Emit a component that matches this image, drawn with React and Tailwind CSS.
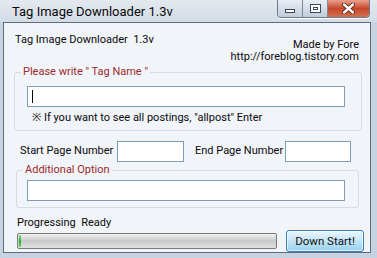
import React from "react";

const font = { fontFamily: 'Roboto, "Noto Sans", sans-serif' };

function Box({ className = "" }) {
  return <div className={"bg-white border border-[#7f9db9] shrink-0 " + className} />;
}

function Group({ label, className = "", children }) {
  return (
    <div className={"relative border border-[#d5dce4] rounded-[3px] " + className}>
      <span className="absolute -top-[8px] left-[6px] px-[2px] bg-[#f1f4f9] text-[#9c2a2a] leading-[14px] whitespace-nowrap">
        {label}
      </span>
      {children}
    </div>
  );
}

export default function App() {
  return (
    <div
      className="w-[377px] h-[258px] overflow-hidden bg-[#c7d3e0] flex flex-col text-[11px] text-[#0a0a0a] leading-[14px]"
      style={font}
    >
      {/* title bar */}
      <div className="h-[22px] shrink-0 flex items-start bg-gradient-to-b from-[#e4e9ef] to-[#d3dbe5] pl-[12px] pr-[7px]">
        <div className="text-[13px] leading-[16px] pt-[4px] flex-1">Tag Image Downloader 1.3v</div>
        <div className="flex h-[18px] rounded-b-[4px] border border-t-0 border-[#6b7b8f] overflow-hidden shadow-[0_1px_0_#ffffff]">
          <div className="w-[25px] bg-gradient-to-b from-[#e9eef4] to-[#c2ccd8] border-r border-[#7d8a9b] flex items-center justify-center">
            <div className="w-[10px] h-[4px] mt-[5px] border border-[#3b4656] bg-white" />
          </div>
          <div className="w-[25px] bg-gradient-to-b from-[#e9eef4] to-[#c2ccd8] border-r border-[#7d8a9b] flex items-center justify-center">
            <div className="w-[11px] h-[9px] border border-[#3b4656] bg-white flex items-center justify-center">
              <div className="w-[5px] h-[3px] border border-[#3b4656]" />
            </div>
          </div>
          <div className="w-[41px] bg-gradient-to-b from-[#e8a08e] via-[#c7462a] to-[#d0714f] flex items-center justify-center">
            <svg width="13" height="11" viewBox="0 0 13 11">
              <path d="M2 1.5 L11 9.5 M11 1.5 L2 9.5" stroke="#4a1a10" strokeWidth="4" strokeLinecap="round" />
              <path d="M2 1.5 L11 9.5 M11 1.5 L2 9.5" stroke="#ffffff" strokeWidth="2.4" strokeLinecap="round" />
            </svg>
          </div>
        </div>
      </div>

      {/* client area */}
      <div className="h-[231px] shrink-0 ml-[3px] mr-[6px] bg-[#f1f4f9] border border-[#5b6b80] flex flex-col pl-[10px] pr-[8px]">
        {/* header */}
        <div className="h-[42px] shrink-0 flex justify-between">
          <div className="pt-[10px] pl-[1px] whitespace-nowrap">Tag Image Downloader &nbsp;1.3v</div>
          <div className="text-right leading-[12px] pt-[16px] pr-[3px] whitespace-nowrap">
            <div>Made by Fore</div>
            <div>http://foreblog.tistory.com</div>
          </div>
        </div>

        <Group label={'Please write " Tag Name "'} className="mt-[7px] h-[60px] pl-[12px] pr-[16px] pt-[13px]">
          <div className="h-[21px] bg-white border border-[#7f9db9] flex items-center pl-[4px]">
            <div className="w-[1px] h-[13px] bg-black" />
          </div>
          <div className="mt-[4px] pl-[5px] whitespace-nowrap">※ If you want to see all postings, "allpost" Enter</div>
        </Group>

        <div className="flex items-center mt-[10px] pl-[6px] whitespace-nowrap">
          <span className="w-[97px] shrink-0">Start Page Number</span>
          <Box className="w-[67px] h-[21px]" />
          <span className="ml-[11px] w-[90px] shrink-0">End Page Number</span>
          <Box className="w-[66px] h-[21px]" />
        </div>

        <Group label="Additional Option" className="mt-[8px] ml-[2px] mr-[3px] h-[39px] pl-[10px] pr-[13px] pt-[9px]">
          <Box className="h-[21px]" />
        </Group>

        <div className="mt-[8px] pl-[3px] whitespace-nowrap">Progressing &nbsp;Ready</div>

        <div className="flex items-start pl-[3px]">
          <div className="w-[260px] h-[16px] mt-[3px] shrink-0 border border-[#7a7a7a] rounded-[2px] bg-gradient-to-b from-[#f3f3f3] via-[#c9c9c9] to-[#e2e2e2] flex p-[1px]">
            <div className="w-[2px] h-full bg-gradient-to-b from-[#7ce37c] via-[#18b418] to-[#5fd35f]" />
          </div>
          <button className="ml-[9px] w-[78px] h-[22px] shrink-0 rounded-[3px] border border-[#3c7fb1] bg-gradient-to-b from-[#eaf6fd] via-[#c4e5f6] to-[#98d1ef] text-[11.5px] text-[#111] shadow-[inset_0_0_0_1px_#ffffffa0] leading-[14px]">
            Down Start!
          </button>
        </div>
      </div>
    </div>
  );
}
